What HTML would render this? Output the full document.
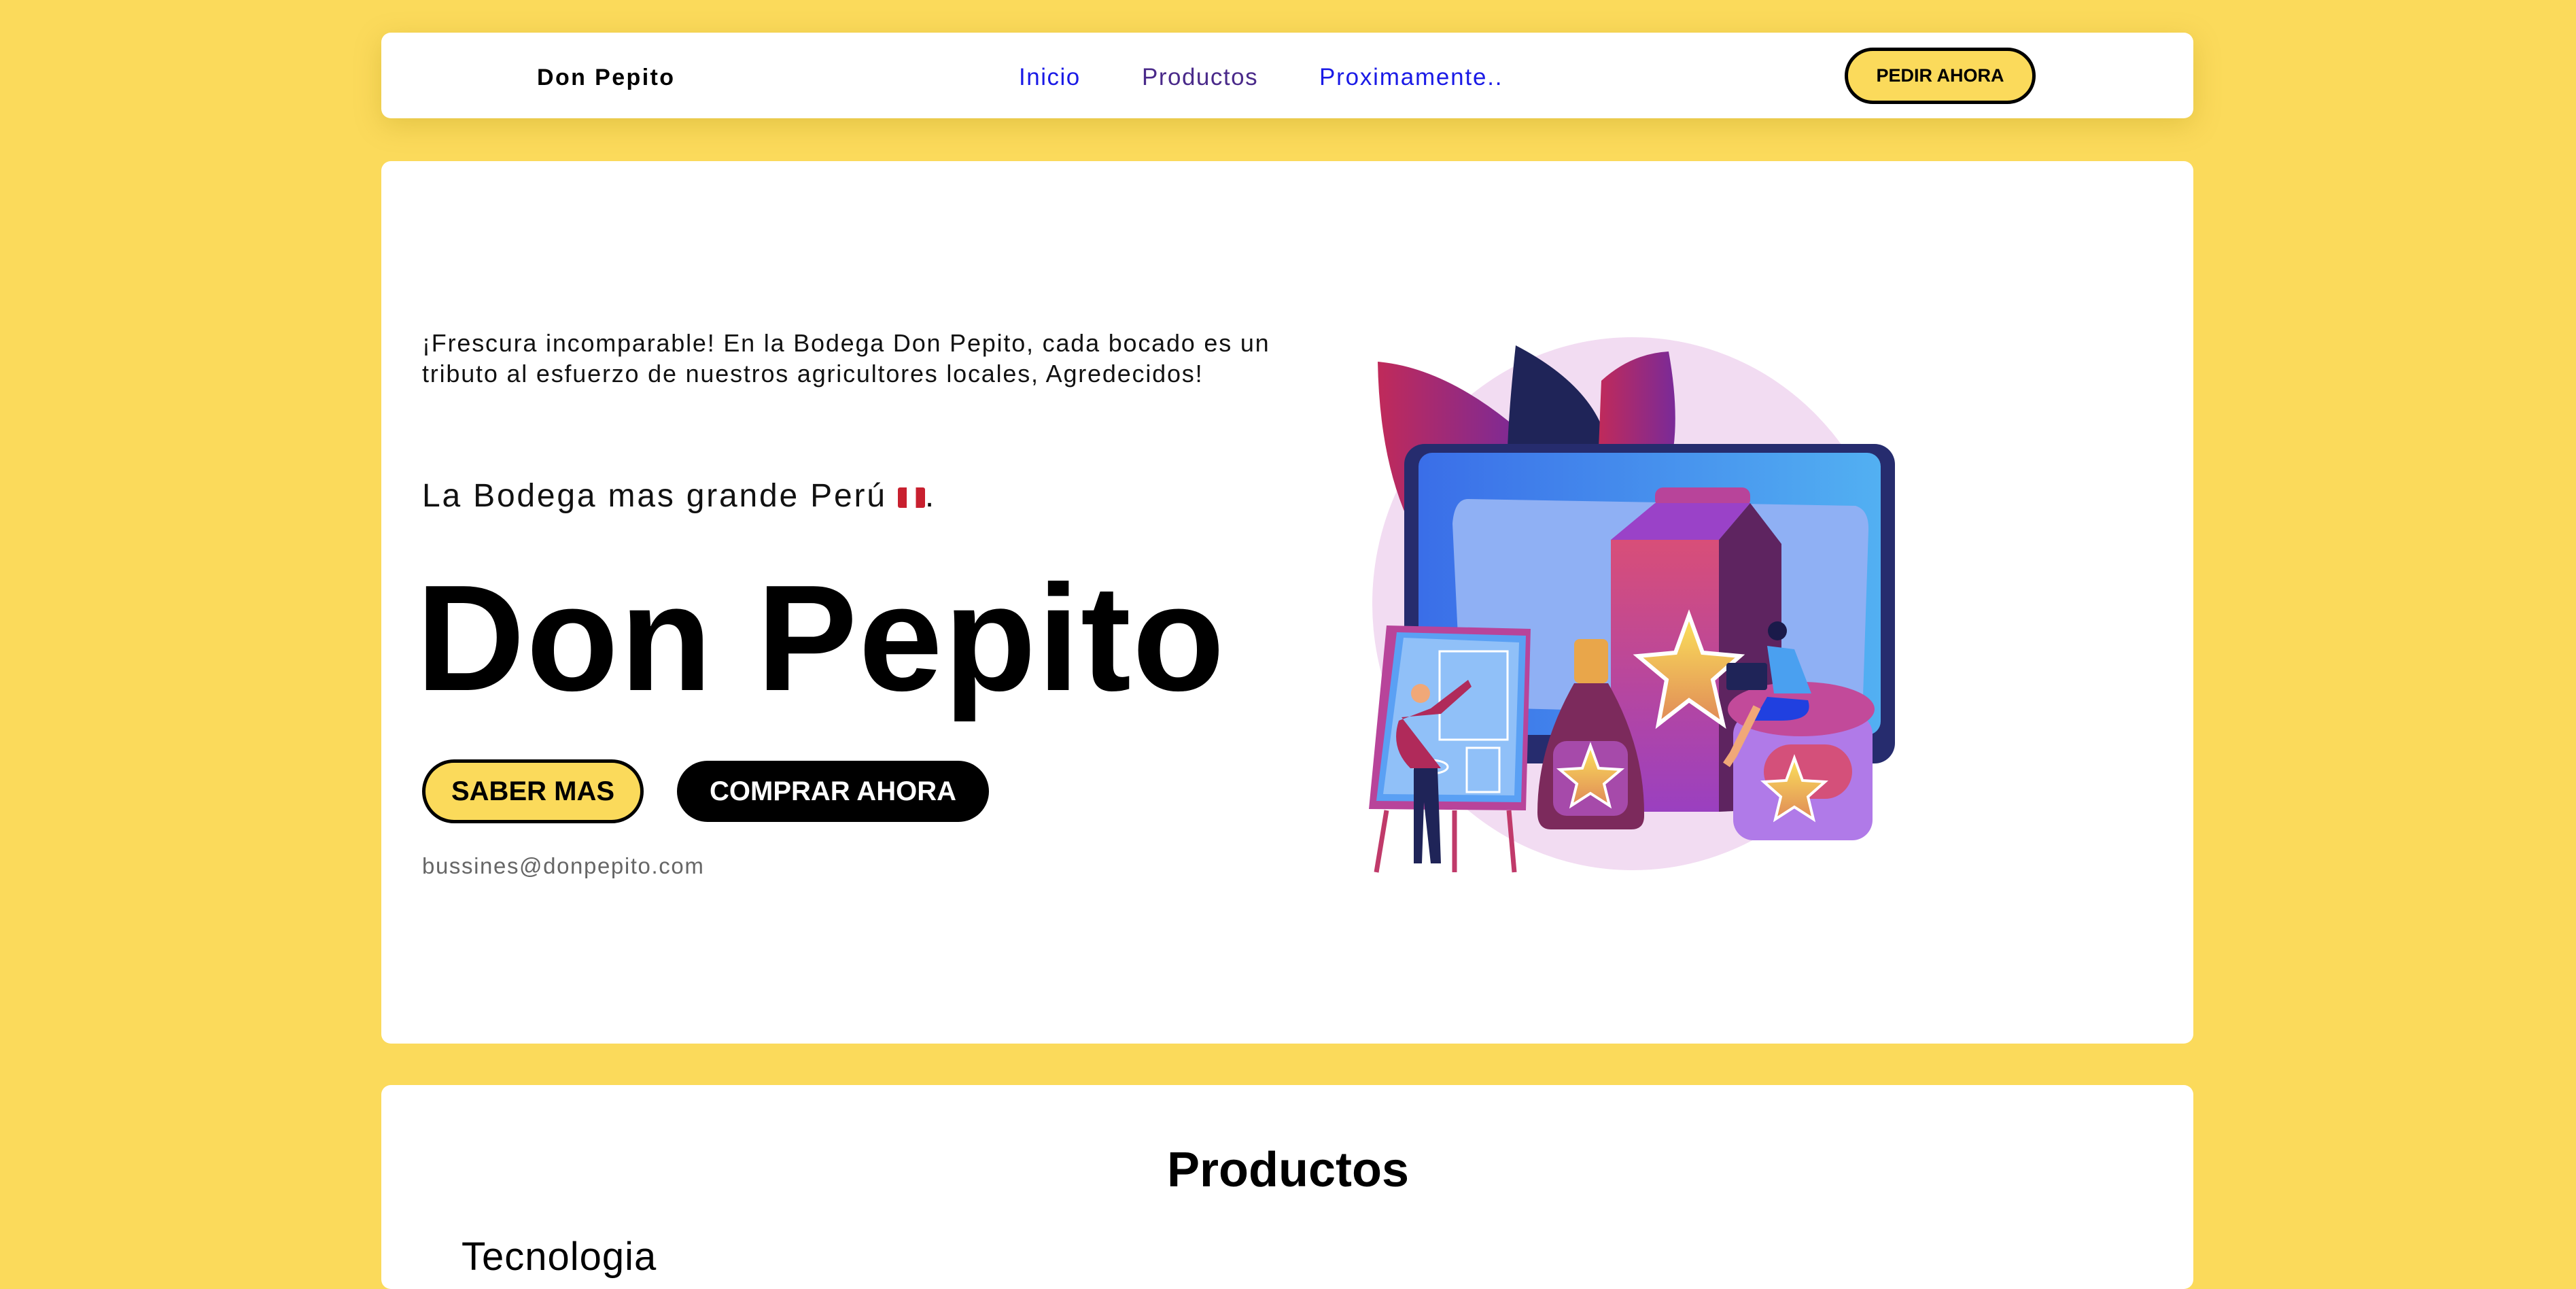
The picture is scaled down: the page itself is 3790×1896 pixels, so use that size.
<!DOCTYPE html>
<html><head><meta charset="utf-8"><style>
*{margin:0;padding:0;box-sizing:border-box}
body{width:3790px;height:1868px;background:#FBDA5B;font-family:"Liberation Sans",sans-serif;position:relative;overflow:hidden}
.card{position:absolute;background:#fff;border-radius:14px}
.t{position:absolute;white-space:nowrap}
.btn{position:absolute;border-radius:60px;display:flex;align-items:center;justify-content:center;font-weight:bold}
</style></head><body>
<div class="card" style="left:561px;top:48px;width:2666px;height:126px;box-shadow:0 10px 40px rgba(160,130,0,0.25)"></div>
<div class="t" style="left:790px;top:95px;font-size:34px;font-weight:bold;color:#000;letter-spacing:2.4px">Don Pepito</div>
<div class="t" style="left:1499px;top:94px;font-size:35px;color:#1a1ae6;letter-spacing:1.5px">Inicio</div>
<div class="t" style="left:1680px;top:94px;font-size:35px;color:#4a2a8a;letter-spacing:1.5px">Productos</div>
<div class="t" style="left:1941px;top:94px;font-size:35px;color:#1a1ae6;letter-spacing:1.8px">Proximamente..</div>
<div class="btn" style="left:2714px;top:70px;width:281px;height:83px;background:#FBDA5B;border:5px solid #000;font-size:27px;color:#000">PEDIR AHORA</div>

<div class="card" style="left:561px;top:237px;width:2666px;height:1298px"></div>
<div class="t" style="left:621px;top:482px;font-size:36px;line-height:45px;color:#111;letter-spacing:1.8px">¡Frescura incomparable! En la Bodega Don Pepito, cada bocado es un<br>tributo al esfuerzo de nuestros agricultores locales, Agredecidos!</div>
<div class="t" style="left:621px;top:702px;font-size:48px;color:#111;letter-spacing:2.8px">La Bodega mas grande Perú <span style="display:inline-block;width:40px;height:30px;background:linear-gradient(90deg,#c8202f 33%,#fff 33%,#fff 66%,#c8202f 66%);vertical-align:-2px;border-radius:3px"></span>.</div>
<div class="t" style="left:612px;top:812px;font-size:222px;font-weight:bold;color:#000;letter-spacing:2px">Don Pepito</div>
<div class="btn" style="left:621px;top:1117px;width:326px;height:94px;background:#FBDA5B;border:5px solid #000;font-size:40px;color:#000">SABER MAS</div>
<div class="btn" style="left:996px;top:1119px;width:459px;height:90px;background:#000;font-size:40px;color:#fff">COMPRAR AHORA</div>
<div class="t" style="left:621px;top:1255px;font-size:33px;color:#666;letter-spacing:1.6px">bussines@donpepito.com</div>

<svg style="position:absolute;left:0;top:0" width="3790" height="1868">
<defs>
<linearGradient id="lf" x1="0" x2="1"><stop offset="0" stop-color="#c02a5a"/><stop offset="1" stop-color="#7a2a98"/></linearGradient>
<linearGradient id="scr" x1="0" y1="0" x2="1" y2="0"><stop offset="0" stop-color="#3a6ee8"/><stop offset="1" stop-color="#52b0f2"/></linearGradient>
<linearGradient id="cf" x1="0" y1="0" x2="0" y2="1"><stop offset="0" stop-color="#d84e78"/><stop offset="1" stop-color="#9a40c0"/></linearGradient>
<linearGradient id="st" x1="0" y1="0" x2="0" y2="1"><stop offset="0" stop-color="#fbe25a"/><stop offset="1" stop-color="#e08a58"/></linearGradient>
</defs>
<ellipse cx="2402" cy="888" rx="383" ry="392" fill="#f2dcf2"/>
<path d="M2027 532 Q2120 540 2220 620 L2240 740 L2090 800 Q2030 700 2027 532Z" fill="url(#lf)"/>
<path d="M2230 508 Q2330 560 2358 630 L2358 660 L2218 660 Q2220 600 2230 508Z" fill="#1f2458"/>
<path d="M2356 560 Q2400 520 2455 517 Q2470 600 2462 660 L2352 660Z" fill="url(#lf)"/>
<rect x="2066" y="653" width="722" height="470" rx="30" fill="#262c6e"/>
<rect x="2087" y="666" width="680" height="415" rx="20" fill="url(#scr)"/>
<path d="M2160 734 L2730 744 Q2750 750 2749 780 L2740 1055 L2150 1040 L2137 770 Q2140 734 2160 734Z" fill="#8fb0f4"/>
<rect x="2435" y="717" width="140" height="30" rx="12" fill="#b8449a"/>
<path d="M2370 794 L2435 740 L2575 740 L2529 794Z" fill="#9a42c8"/>
<rect x="2370" y="794" width="159" height="400" fill="url(#cf)"/>
<path d="M2529 794 L2575 740 L2621 800 L2621 1190 L2529 1194Z" fill="#5e2460"/>
<path d="M2485 905 L2505 960 L2560 965 L2520 1000 L2535 1065 L2485 1030 L2440 1065 L2452 1000 L2410 965 L2465 960Z" fill="url(#st)" stroke="#fff" stroke-width="6"/>
<rect x="2316" y="940" width="50" height="65" rx="8" fill="#e9a64a"/>
<path d="M2316 1005 L2366 1005 Q2420 1100 2419 1200 Q2419 1220 2400 1220 L2282 1220 Q2262 1220 2262 1195 Q2262 1100 2316 1005Z" fill="#7c2a5c"/>
<rect x="2285" y="1090" width="110" height="110" rx="20" fill="#a64aaa"/>
<path d="M2340 1097 L2352 1130 L2385 1132 L2360 1153 L2368 1185 L2340 1167 L2312 1185 L2320 1153 L2295 1132 L2328 1130Z" fill="url(#st)" stroke="#fff" stroke-width="4"/>
<rect x="2550" y="1050" width="205" height="186" rx="30" fill="#b07ae8"/>
<ellipse cx="2650" cy="1043" rx="108" ry="40" fill="#c24a9a"/>
<rect x="2595" y="1095" width="130" height="80" rx="40" fill="#d4507a"/>
<path d="M2640 1115 L2652 1148 L2685 1150 L2660 1172 L2668 1205 L2640 1187 L2612 1205 L2620 1172 L2595 1150 L2628 1148Z" fill="url(#st)" stroke="#fff" stroke-width="4"/>
<circle cx="2615" cy="928" r="14" fill="#1a1a4a"/>
<path d="M2600 950 L2640 955 L2665 1020 L2610 1020Z" fill="#4aa0f0"/>
<rect x="2540" y="975" width="60" height="40" rx="4" fill="#1f2458"/>
<path d="M2600 1025 L2660 1030 Q2670 1060 2620 1060 L2580 1060Z" fill="#2040e0"/>
<path d="M2585 1040 L2550 1110 L2540 1125" stroke="#f0a878" stroke-width="12" fill="none"/>
<path d="M2040 920 L2252 925 L2245 1192 L2014 1190Z" fill="#b8449a"/>
<path d="M2055 930 L2245 935 L2238 1180 L2025 1178Z" fill="#5aa0f4"/>
<path d="M2065 938 L2235 945 L2228 1170 L2035 1168Z" fill="#90c0f8"/>
<g stroke="#fff" stroke-width="3" fill="none"><rect x="2118" y="958" width="100" height="130"/><rect x="2158" y="1100" width="48" height="65"/><ellipse cx="2105" cy="1128" rx="25" ry="10"/></g>
<g stroke="#c03a6a" stroke-width="7"><line x1="2040" y1="1192" x2="2025" y2="1283"/><line x1="2220" y1="1192" x2="2228" y2="1283"/><line x1="2140" y1="1192" x2="2140" y2="1283"/></g>
<circle cx="2090" cy="1020" r="14" fill="#f0a878"/>
<path d="M2062 1055 L2120 1050 L2165 1010 L2160 1000 L2105 1042 L2058 1060 Q2045 1100 2075 1130 L2120 1130 Z" fill="#b02a5a"/>
<path d="M2080 1130 L2115 1130 L2120 1270 L2105 1270 L2095 1180 L2092 1270 L2080 1270Z" fill="#1f2458"/>
</svg>

<div class="card" style="left:561px;top:1596px;width:2666px;height:300px"></div>
<div class="t" style="left:0;width:3790px;text-align:center;top:1680px;font-size:72px;font-weight:bold;color:#000">Productos</div>
<div class="t" style="left:679px;top:1815px;font-size:58px;color:#000;letter-spacing:1px">Tecnologia</div>
</body></html>
